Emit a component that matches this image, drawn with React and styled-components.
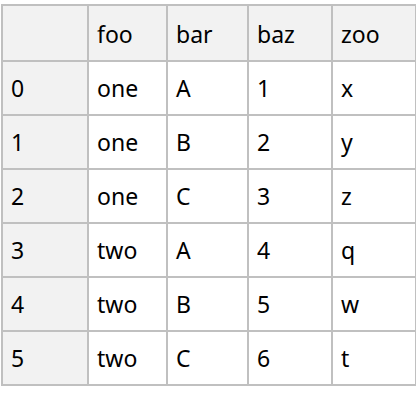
import styled, { createGlobalStyle } from "styled-components"

const GlobalStyle = createGlobalStyle`
   body {
      margin: 0;
      background: #ffffff;
      font-family: "Noto Sans", "Open Sans", sans-serif;
   }
`

const Table = styled.table`
   margin: 4px 0 0 1px;
   border-collapse: collapse;
   table-layout: fixed;
   width: 414px;
   color: #000000;
   font-size: 23px;
`

const Cell = styled.td`
   border: 2px solid #c0c0c0;
   padding: 0 8px;
   height: 52px;
   text-align: left;
   vertical-align: middle;
   font-weight: 400;
   background: ${(p) => (p.$head ? "#f2f2f2" : "#ffffff")};
`

const HeadRow = styled.tr`
   & > td {
      height: 53px;
      padding-top: 1px;
   }
`

const columns = ["foo", "bar", "baz", "zoo"]
const widths = [86, 79, 81, 84, 84]

const rows = [
   ["one", "A", "1", "x"],
   ["one", "B", "2", "y"],
   ["one", "C", "3", "z"],
   ["two", "A", "4", "q"],
   ["two", "B", "5", "w"],
   ["two", "C", "6", "t"],
]

export default function App() {
   return (
      <>
         <GlobalStyle />
         <Table>
            <colgroup>
               {widths.map((w, i) => (
                  <col key={i} style={{ width: w }} />
               ))}
            </colgroup>
            <tbody>
               <HeadRow>
                  <Cell $head />
                  {columns.map((c) => (
                     <Cell key={c} $head>
                        {c}
                     </Cell>
                  ))}
               </HeadRow>
               {rows.map((r, i) => (
                  <tr key={i}>
                     <Cell $head>{i}</Cell>
                     {r.map((v, j) => (
                        <Cell key={j}>{v}</Cell>
                     ))}
                  </tr>
               ))}
            </tbody>
         </Table>
      </>
   )
}
